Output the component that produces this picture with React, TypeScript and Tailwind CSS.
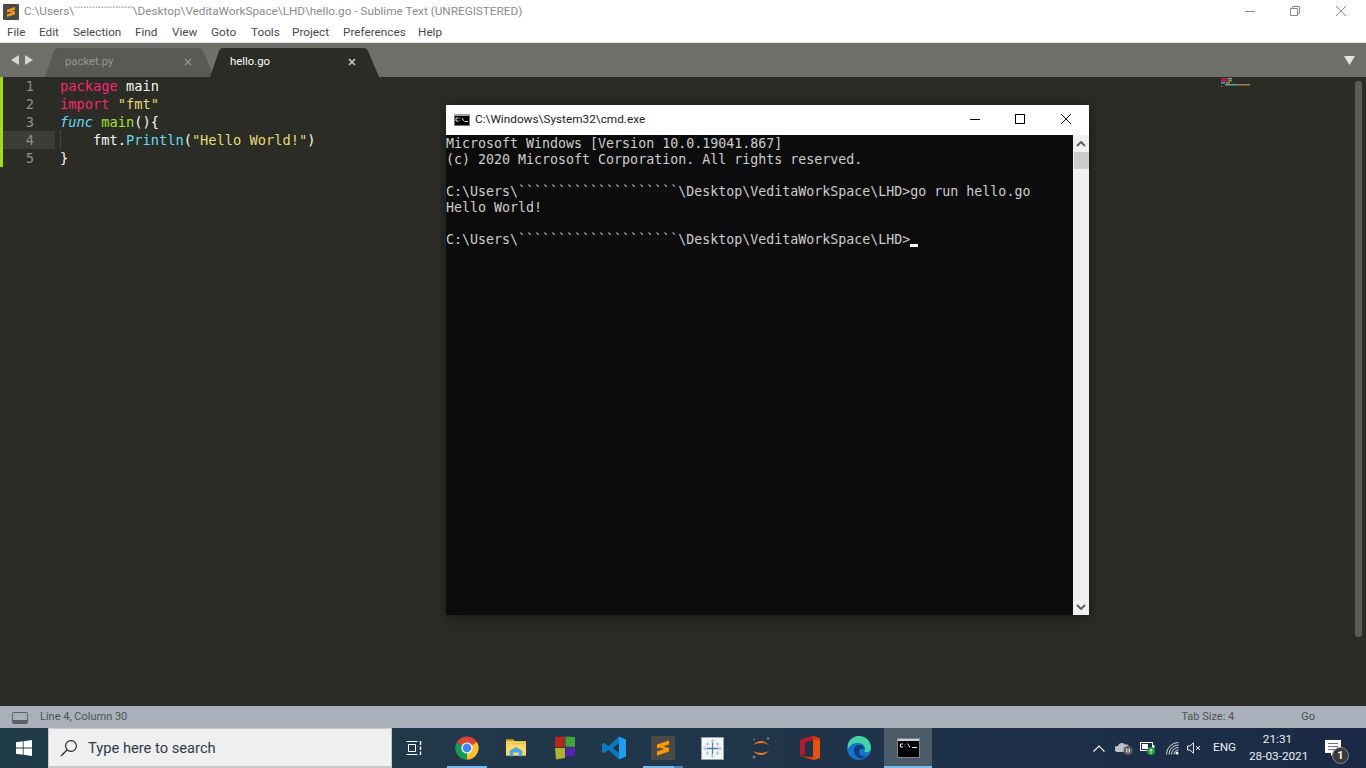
const ticks = "````````````````````";
const ui = { fontFamily: 'Roboto, "Noto Sans", sans-serif' };

function Tab({ name, active }: { name: string; active?: boolean }) {
  return (
    <div className={`relative flex h-[34px] w-[168px] items-center pt-[4px] ${active ? "text-white" : "text-[#96978f]"}`}>
      <svg className="absolute inset-0" width="170" height="34" viewBox="0 0 170 34">
        <path d="M0 34 L9 8 Q10 5 14 5 L153 5 Q157 5 158 8 L169 34 Z" fill={active ? "#2b2c26" : "#595a54"} />
      </svg>
      <span className="relative ml-[20px] text-[11.3px]" style={ui}>{name}</span>
      <svg className={`absolute top-[15px] ${active ? "left-[138px]" : "left-[139px]"}`} width="8" height="8" viewBox="0 0 8 8">
        <path d="M1 1 L7 7 M7 1 L1 7" stroke={active ? "#c8c8c4" : "#8c8d86"} strokeWidth="1.7" />
      </svg>
    </div>
  );
}

function CodeLine({ n, current, children }: { n: number; current?: boolean; children: React.ReactNode }) {
  return (
    <div className="flex h-[18px] items-center leading-[18px]">
      <div className={`flex h-[18px] w-[52px] shrink-0 justify-end pr-[21px] text-[#8f908a] ${current ? "bg-[#3c3d36]" : ""}`}>{n}</div>
      <div className="ml-[5px] whitespace-pre text-[#f8f8f2]">{children}</div>
    </div>
  );
}

function Slot({ children, line }: { children: React.ReactNode; line?: boolean }) {
  return (
    <div className="relative flex h-[40px] w-[49px] shrink-0 items-center justify-center pr-[1px]">
      {children}
      {line && <div className="absolute bottom-0 left-[4px] h-[2px] w-[40px] bg-[#76b9ed]" />}
    </div>
  );
}

export default function App() {
  return (
    <div className="relative flex h-[768px] w-[1366px] flex-col overflow-hidden bg-[#2b2c26]">
      {/* sublime window chrome */}
      <div className="flex h-[22px] shrink-0 items-center bg-white pl-[3px] pt-[1px]">
        <svg width="16" height="16" viewBox="0 0 16 16">
          <rect width="16" height="16" rx="1" fill="#4a4a48" />
          <path d="M12 3 L4 5.7 V8.4 L12 5.7 Z M4 13 L12 10.3 V7.6 L4 10.3 Z M4 7 L12 9.5 V7.5 L6 6 Z" fill="#f59a1b" />
        </svg>
        <span className="ml-[5px] whitespace-pre text-[11.75px] text-[#8b8b8b]" style={ui}>
          C:\Users\<span className="tracking-[-0.7px]">{ticks}</span>\Desktop\VeditaWorkSpace\LHD\hello.go - Sublime Text (UNREGISTERED)
        </span>
        <div className="mb-[2px] ml-auto flex items-center">
          <svg width="10" height="10" viewBox="0 0 10 10" className="mr-[35px]"><path d="M0 5.5 H10" stroke="#8c8c8c" /></svg>
          <svg width="10" height="10" viewBox="0 0 10 10" className="mr-[36px]"><path d="M2.5 2 V.5 H9.5 V7.5 H8 M.5 2.5 H7.5 V9.5 H.5 Z" stroke="#8c8c8c" fill="none" /></svg>
          <svg width="10" height="10" viewBox="0 0 10 10" className="mr-[20px]"><path d="M0 0 L10 10 M10 0 L0 10" stroke="#8c8c8c" /></svg>
        </div>
      </div>
      <div className="flex h-[20px] shrink-0 items-center bg-white pl-[7px] pt-[2px] text-[11.75px] text-[#4a4a4a]" style={ui}>
        <span className="w-[32px]">File</span>
        <span className="w-[34px]">Edit</span>
        <span className="w-[62px]">Selection</span>
        <span className="w-[37px]">Find</span>
        <span className="w-[39px]">View</span>
        <span className="w-[40px]">Goto</span>
        <span className="w-[41px]">Tools</span>
        <span className="w-[51px]">Project</span>
        <span className="w-[75px]">Preferences</span>
        <span>Help</span>
      </div>
      <div className="h-px shrink-0 bg-[#e8e8e8]" />

      {/* tabs */}
      <div className="flex h-[34px] shrink-0 items-end bg-[#6f706a]">
        <div className="flex w-[45px] items-center self-center pl-[11px]">
          <svg width="24" height="10" viewBox="0 0 24 10">
            <path d="M8 0 V10 L0 5 Z M14 0 V10 L22 5 Z" fill="#d6d6d2" />
          </svg>
        </div>
        <Tab name="packet.py" />
        <div className="-ml-[3px]">
          <Tab name="hello.go" active />
        </div>
        <svg className="ml-auto mr-[11px] self-center" width="11" height="9" viewBox="0 0 11 9">
          <path d="M0 0 H11 L5.5 9 Z" fill="#e4e4e0" />
        </svg>
      </div>

      {/* editor */}
      <div className="relative flex-1 bg-[#2b2c26]">
        <div className="relative border-l-[3px] border-[#a6d81f] text-[13.7px]" style={{ fontFamily: '"DejaVu Sans Mono", monospace' }}>
          <CodeLine n={1}><span className="text-[#f92672]">package</span> main</CodeLine>
          <CodeLine n={2}><span className="text-[#f92672]">import</span> <span className="text-[#e6db74]">"fmt"</span></CodeLine>
          <CodeLine n={3}><span className="italic text-[#66d9ef]">func</span> <span className="text-[#a6e22e]">main</span>(){"{"}</CodeLine>
          <CodeLine n={4} current>{"    "}fmt.<span className="text-[#66d9ef]">Println</span>(<span className="text-[#e6db74]">"Hello World!"</span>)</CodeLine>
          <CodeLine n={5}>{"}"}</CodeLine>
        </div>
        <div className="absolute left-[60px] top-[54px] h-[18px] border-l border-dotted border-[#5d5e58]" />
        {/* minimap */}
        <svg className="absolute left-[1221px] top-[1px] opacity-70" width="32" height="9" viewBox="0 0 32 9">
          <rect x="0" y="0" width="7" height="1.5" fill="#f92672" /><rect x="7" y="0" width="4" height="1.5" fill="#c8c8c0" />
          <rect x="0" y="2" width="6" height="1.5" fill="#f92672" /><rect x="7" y="2" width="4" height="1.5" fill="#b8b060" />
          <rect x="0" y="4" width="4" height="1.5" fill="#66d9ef" /><rect x="5" y="4" width="4" height="1.5" fill="#a6e22e" />
          <rect x="4" y="6" width="4" height="1.5" fill="#c8c8c0" /><rect x="8" y="6" width="7" height="1.5" fill="#66d9ef" /><rect x="15" y="6" width="14" height="1.5" fill="#b8b060" />
          <rect x="0" y="8" width="1" height="1" fill="#c8c8c0" />
        </svg>
        <div className="absolute left-[1355px] top-[4px] h-[556px] w-[7px] rounded-[3px] bg-[#5a5b55]" />
      </div>

      {/* status bar */}
      <div className="flex h-[22px] shrink-0 items-center bg-[#a9b0b9] pt-px text-[11px] text-[#4e5257]" style={ui}>
        <svg className="ml-[12px]" width="16" height="12" viewBox="0 0 16 12">
          <rect x=".5" y=".5" width="15" height="11" rx="1" fill="none" stroke="#5d6167" />
          <rect x="1" y="8" width="14" height="3.5" fill="#5d6167" />
        </svg>
        <span className="ml-[12px]">Line 4, Column 30</span>
        <span className="ml-auto">Tab Size: 4</span>
        <span className="ml-[67px] mr-[51px]">Go</span>
      </div>

      {/* taskbar */}
      <div className="flex h-[40px] shrink-0 items-center bg-gradient-to-r from-[#1f3b48] via-[#20364a] to-[#1a2a46] text-white" style={ui}>
        <div className="flex w-[48px] shrink-0 justify-center">
          <svg width="16" height="16" viewBox="0 0 16 16">
            <path d="M0 2.3 L6.8 1.3 V7.6 H0 Z M7.6 1.2 L16 0 V7.6 H7.6 Z M0 8.4 H6.8 V14.7 L0 13.7 Z M7.6 8.4 H16 V16 L7.6 14.8 Z" fill="#fff" />
          </svg>
        </div>
        <div className="flex h-[40px] w-[344px] shrink-0 items-center border border-b-2 border-[#c9c9c9] bg-[#f0f0f0] pl-[11px]">
          <svg width="18" height="18" viewBox="0 0 18 18">
            <circle cx="11" cy="7" r="5.4" fill="none" stroke="#222" strokeWidth="1.1" />
            <path d="M7 11 L1 17" stroke="#222" strokeWidth="1.2" />
          </svg>
          <span className="ml-[10px] pt-px text-[14.7px] text-[#2b3a4a]">Type here to search</span>
        </div>
        <div className="flex w-[51px] shrink-0 justify-center pr-[7px]">
          <svg width="16" height="16" viewBox="0 0 16 16" fill="none" stroke="#fff">
            <path d="M.5 1.5 H11.5 M2.5 4.5 H9.5 V11.5 H2.5 Z M.5 14.5 H11.5" />
            <path d="M14.5 1 V5 M14.5 6.5 V10 M14.5 11.5 V15" strokeWidth="1.4" />
          </svg>
        </div>
        <Slot line>
          <svg width="24" height="24" viewBox="0 0 24 24">
            <circle cx="12" cy="12" r="11.5" fill="#db4437" />
            <path d="M12 12 L22 6.2 A11.5 11.5 0 0 1 12 23.5 Z" fill="#fbc02d" />
            <path d="M12 12 L12 23.5 A11.5 11.5 0 0 1 2 6.2 Z" fill="#0f9d58" />
            <circle cx="12" cy="12" r="5.6" fill="#fff" />
            <circle cx="12" cy="12" r="4.4" fill="#4285f4" />
          </svg>
        </Slot>
        <Slot>
          <svg width="22" height="20" viewBox="0 0 24 22">
            <path d="M1 1.5 H9 L11 3.5 H1 Z" fill="#d9a21f" />
            <path d="M1 3.5 H23 V19.5 H1 Z" fill="#fbd968" />
            <path d="M1 6 L23 5 V7 H1 Z" fill="#f0c040" />
            <path d="M5 20 V14 L12 10 L19 14 V20 H15 V16 H9 V20 Z" fill="#4aa8e8" />
          </svg>
        </Slot>
        <Slot>
          <svg width="22" height="24" viewBox="0 0 22 24">
            <path d="M1 1 L11 .5 V11 L1 11.5 Z" fill="#b4261c" />
            <path d="M11.5 .5 L21 1 V11 L11.5 10.5 Z" fill="#3fa43a" />
            <path d="M1 12 L11 12 V22 L2 23.5 Z" fill="#b0b030" />
            <path d="M11.5 11.5 L21 11 V20 L11.5 21 Z" fill="#5522aa" />
          </svg>
        </Slot>
        <Slot>
          <svg width="24" height="24" viewBox="0 0 24 24">
            <path d="M17 .5 L24 3.5 V20.5 L17 23.5 L6.5 13.5 L2 17 L0 15.5 V8.5 L2 7 L6.5 10.5 Z M17 6.5 L10.5 12 L17 17.5 Z" fill="#1f9cf0" fillRule="evenodd" />
            <path d="M17 .5 L6.5 10.5 L2 7 L0 8.5 V15.5 L2 17 L6.5 13.5 L17 23.5 V17.5 L10.5 12 L17 6.5 Z" fill="#0a78c2" />
          </svg>
        </Slot>
        <Slot>
          <svg width="24" height="24" viewBox="0 0 24 24">
            <rect width="24" height="24" rx="1.5" fill="#4a4a48" />
            <path d="M18 4.5 L6 8.5 V12.5 L18 8.5 Z M6 19.5 L18 15.5 V11.5 L6 15.5 Z M6 11 L18 14.5 V12 L9 9.5 Z" fill="#ff9800" />
          </svg>
          <div className="absolute bottom-0 left-[4px] h-[2px] w-[31px] bg-[#76b9ed]" />
          <div className="absolute bottom-0 left-[35px] h-[2px] w-[9px] bg-[#4d86b3]" />
        </Slot>
        <Slot>
          <svg width="23" height="23" viewBox="0 0 23 23">
            <rect x=".5" y=".5" width="22" height="22" fill="#f4f6f8" stroke="#9aa4ad" />
            <path d="M11.5 5 V18 M5 11.5 H18" stroke="#4f7fa8" strokeWidth="1.3" />
            <path d="M11.5 2 V6 M9.5 4 H13.5 M11.5 17 V21 M9.5 19 H13.5 M2 11.5 H6 M4 9.5 V13.5 M17 11.5 H21 M19 9.5 V13.5 M6.5 5 V9 M4.5 7 H8.5 M16.5 5 V9 M14.5 7 H18.5 M6.5 14 V18 M4.5 16 H8.5 M16.5 14 V18 M14.5 16 H18.5" stroke="#a9c2d6" strokeWidth="1" />
          </svg>
        </Slot>
        <Slot>
          <svg width="20" height="24" viewBox="0 0 20 24" fill="none">
            <path d="M2 9 Q10 1 18 9 Q10 5 2 9 Z" fill="#f37726" />
            <path d="M2 15 Q10 23 18 15 Q10 19 2 15 Z" fill="#f37726" />
            <circle cx="17" cy="2.5" r="1.3" fill="#777" />
            <circle cx="3" cy="21" r="1.6" fill="#777" />
            <circle cx="3" cy="3.5" r=".8" fill="#999" />
          </svg>
        </Slot>
        <Slot>
          <svg width="20" height="24" viewBox="0 0 20 24">
            <path d="M13 0 L20 2 V22 L13 24 L0 20 L13 21 V4 L5 6 V16 L0 20 V4 Z" fill="#d83b01" />
            <path d="M13 0 V4 L5 6 V18 L0 20 V4 Z" fill="#b7192e" />
            <path d="M13 4 H20 V22 L13 24 Z" fill="#e8500f" />
          </svg>
        </Slot>
        <Slot>
          <svg width="24" height="24" viewBox="0 0 24 24">
            <circle cx="12" cy="12" r="12" fill="#1173c9" />
            <path d="M1 8 C3 1 10 0 12 0 C19 0 24 5 24 12 C24 16 20 17 17 16 C20 12 17 7 11 7 C6 7 3 9 1 13 Z" fill="#45d3a3" />
            <path d="M7 14 C7 10 10 9 13 9 C15 9 17 11 17 13 C15 12 12 13 12 16 C12 19 15 21 19 20 C15 25 7 22 7 14 Z" fill="#0c3f7d" />
          </svg>
        </Slot>
        <div className="flex h-[40px] w-[48px] shrink-0 items-center justify-center border-b-2 border-[#76b9ed] bg-[#4a5a68] pt-[1px]">
          <svg width="23" height="20" viewBox="0 0 23 20">
            <rect x=".5" y=".5" width="22" height="19" fill="#000" stroke="#7b8590" />
            <rect x="1" y="1" width="21" height="2" fill="#c9ced3" />
            <path d="M3.5 6 H6 M3.5 6 V9 H6 M8 6 V6.5 M8 8.5 V9 M10.5 5.5 L13 9.5 M15 9.5 H20" stroke="#e8e8e8" fill="none" />
          </svg>
        </div>

        <div className="flex flex-1 items-center">
          <svg className="ml-[161px]" width="12" height="7" viewBox="0 0 12 7"><path d="M.5 6.5 L6 1 L11.5 6.5" stroke="#fff" fill="none" strokeWidth="1.2" /></svg>
          <svg className="ml-[10px]" width="18" height="14" viewBox="0 0 18 14">
            <path d="M2 11 A3 3 0 0 1 3 5 A4 4 0 0 1 10 3.5 A3 3 0 0 1 14 7 H14 V11 Z" fill="#b9c0c6" />
            <circle cx="13" cy="9.5" r="4.5" fill="#5b5f63" />
            <path d="M11.8 7.5 V11.5 M14.2 7.5 V11.5" stroke="#fff" />
          </svg>
          <svg className="ml-[7px]" width="16" height="14" viewBox="0 0 16 14">
            <rect x=".5" y="1.5" width="12" height="8" fill="none" stroke="#fff" />
            <rect x="2" y="3" width="6" height="5" fill="#fff" />
            <rect x="13" y="4" width="1.5" height="3" fill="#fff" />
            <circle cx="11" cy="10" r="4" fill="#1f9d3a" />
            <path d="M11 13 V8 M9.5 10 L11 8 L12.5 10" stroke="#fff" fill="none" strokeWidth=".8" />
          </svg>
          <svg className="ml-[10px]" width="13" height="13" viewBox="0 0 13 13" fill="none" stroke="#d8dadc">
            <path d="M.5 12.5 A12 12 0 0 1 12.5 .5" /><path d="M3 12.5 A9.5 9.5 0 0 1 12.5 3" /><path d="M5.5 12.5 A7 7 0 0 1 12.5 5.5" /><path d="M8 12.5 A4.5 4.5 0 0 1 12.5 8" />
            <circle cx="11" cy="11" r="1.5" fill="#fff" stroke="none" />
          </svg>
          <svg className="ml-[8px]" width="14" height="12" viewBox="0 0 14 12" fill="none" stroke="#e8e8e8">
            <path d="M.5 4 H3 L6.5 .8 V11.2 L3 8 H.5 Z" />
            <path d="M9 4 L13 8 M13 4 L9 8" />
          </svg>
          <span className="ml-[12px] w-[23px] text-center text-[11.75px] text-[#eef0f2]">ENG</span>
          <div className="ml-[13px] w-[57px] whitespace-nowrap text-center text-[11.75px] leading-[17px] text-[#eef0f2]">
            <div>21:31</div>
            <div>28-03-2021</div>
          </div>
          <div className="relative ml-[19px]">
            <svg width="16" height="16" viewBox="0 0 16 16">
              <path d="M0 0 H16 V13 H9 L6 16 V13 H0 Z" fill="#fff" />
              <path d="M3 3.5 H13 M3 6.5 H13 M3 9.5 H13" stroke="#6b7280" />
            </svg>
            <div className="absolute left-[7px] top-[7px] flex h-[17px] w-[17px] items-center justify-center rounded-full border border-[#888] bg-[#3a3a3a] text-[11px] font-bold leading-none">1</div>
          </div>
        </div>
      </div>

      {/* cmd window floats over the editor */}
      <div className="absolute left-[446px] top-[105px] flex h-[510px] w-[643px] flex-col shadow-[0_2px_14px_rgba(0,0,0,0.45)]">
        <div className="flex h-[30px] shrink-0 items-center bg-white pl-[8px]">
          <svg width="16" height="12" viewBox="0 0 16 12">
            <rect x=".5" y=".5" width="15" height="11" fill="#000" stroke="#777" />
            <rect x="0" y="0" width="16" height="2" fill="#9aa0a6" />
            <path d="M2 4 H4.5 M2 4 V7 H4.5 M6 4.5 V5 M6 6.5 V7 M8 4 L10 7 M10.5 7.5 H14" stroke="#ddd" fill="none" />
          </svg>
          <span className="ml-[5px] text-[11.8px] text-[#222]" style={ui}>C:\Windows\System32\cmd.exe</span>
          <div className="mb-[2px] ml-auto flex items-center">
            <svg width="10" height="10" viewBox="0 0 10 10" className="mr-[35px]"><path d="M0 5.5 H10" stroke="#000" /></svg>
            <svg width="10" height="10" viewBox="0 0 10 10" className="mr-[36px]"><rect x=".5" y=".5" width="9" height="9" fill="none" stroke="#000" /></svg>
            <svg width="10" height="10" viewBox="0 0 10 10" className="mr-[18px]"><path d="M0 0 L10 10 M10 0 L0 10" stroke="#000" /></svg>
          </div>
        </div>
        <div className="flex min-h-0 flex-1">
          <div className="relative flex-1 whitespace-pre bg-[#0c0c0c] text-[13.3px] leading-[16px] text-[#cccccc]" style={{ fontFamily: '"DejaVu Sans Mono", monospace' }}>
            <div className="pt-px">Microsoft Windows [Version 10.0.19041.867]</div>
            <div>(c) 2020 Microsoft Corporation. All rights reserved.</div>
            <div>&nbsp;</div>
            <div>{`C:\\Users\\${ticks}\\Desktop\\VeditaWorkSpace\\LHD>go run hello.go`}</div>
            <div>Hello World!</div>
            <div>&nbsp;</div>
            <div className="flex">
              <span>{`C:\\Users\\${ticks}\\Desktop\\VeditaWorkSpace\\LHD>`}</span>
              <span className="mt-[12px] h-[3px] w-[8px] bg-white" />
            </div>
          </div>
          <div className="flex w-[16px] shrink-0 flex-col items-center bg-[#f0f0f0]">
            <svg className="mt-[6px]" width="10" height="6" viewBox="0 0 10 6"><path d="M1 5 L5 1 L9 5" stroke="#606060" strokeWidth="2" fill="none" /></svg>
            <div className="mt-[5px] h-[17px] w-[15px] bg-[#cdcdcd]" />
            <svg className="mt-auto mb-[5px]" width="10" height="6" viewBox="0 0 10 6"><path d="M1 1 L5 5 L9 1" stroke="#606060" strokeWidth="2" fill="none" /></svg>
          </div>
        </div>
      </div>
    </div>
  );
}
